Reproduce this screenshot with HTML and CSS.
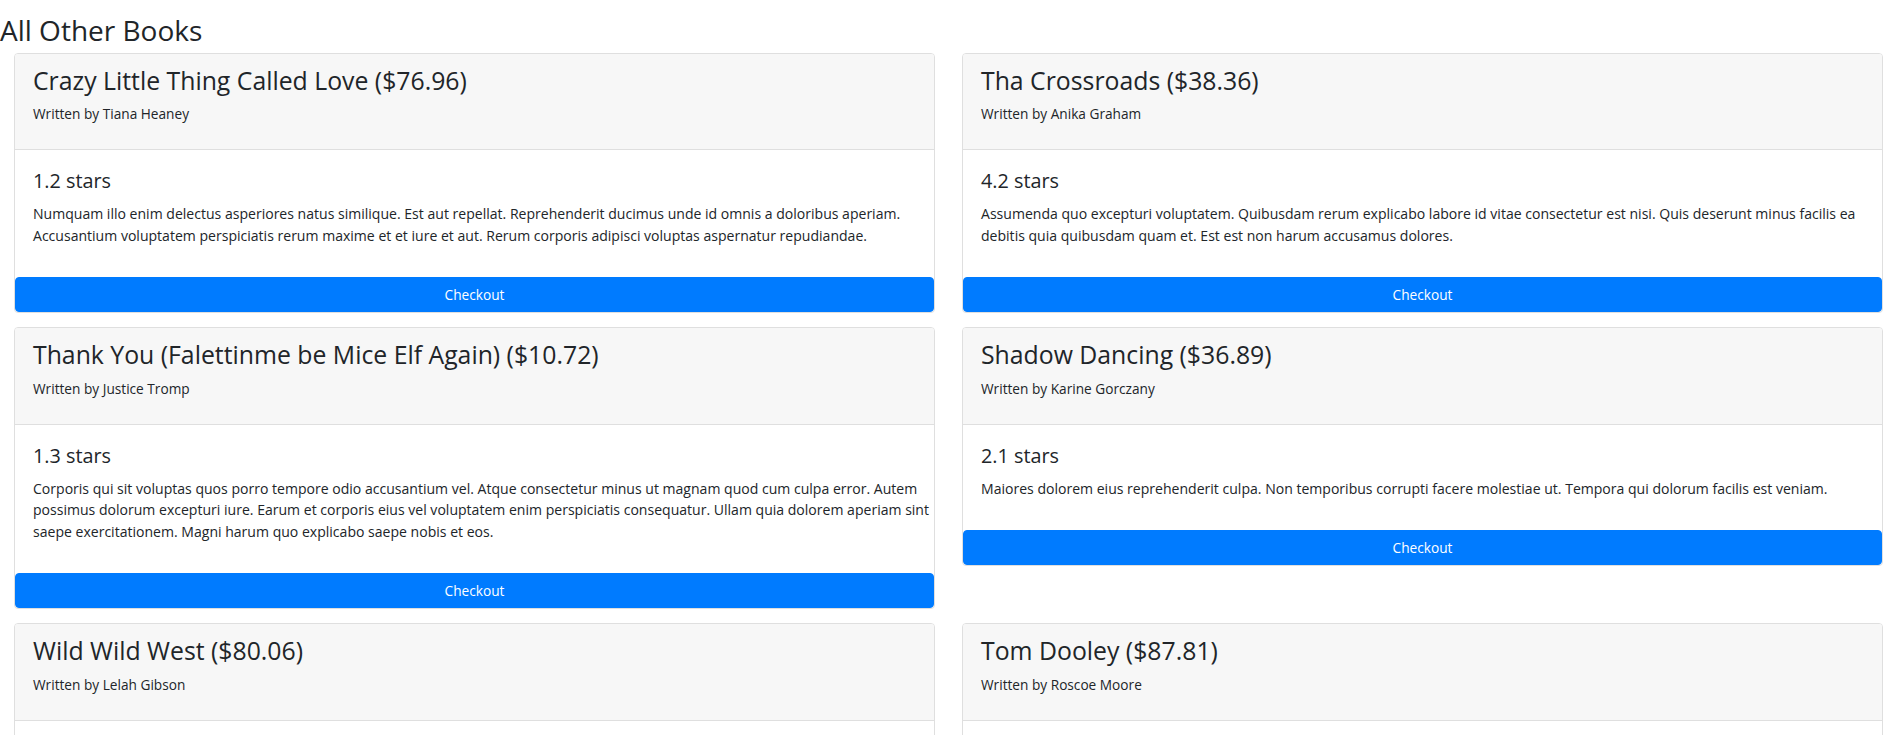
FILE: index.html
```html
<!DOCTYPE html>
<html lang="en">
<head>
<meta charset="utf-8">
<title>All Other Books</title>
<link rel="stylesheet" href="styles.css">
</head>
<body>
<h2 class="page-title">All Other Books</h2>
<div class="book-grid">
  <div class="book-card">
    <div class="book-header">
      <h4 class="book-title">Crazy Little Thing Called Love ($76.96)</h4>
      <p class="book-author">Written by Tiana Heaney</p>
    </div>
    <div class="book-body">
      <h5 class="book-rating">1.2 stars</h5>
      <p class="book-desc">Numquam illo enim delectus asperiores natus similique. Est aut repellat. Reprehenderit ducimus unde id omnis a doloribus aperiam. Accusantium voluptatem perspiciatis rerum maxime et et iure et aut. Rerum corporis adipisci voluptas aspernatur repudiandae.</p>
    </div>
    <button class="checkout-btn" type="button">Checkout</button>
  </div>
  <div class="book-card">
    <div class="book-header">
      <h4 class="book-title">Tha Crossroads ($38.36)</h4>
      <p class="book-author">Written by Anika Graham</p>
    </div>
    <div class="book-body">
      <h5 class="book-rating">4.2 stars</h5>
      <p class="book-desc">Assumenda quo excepturi voluptatem. Quibusdam rerum explicabo labore id vitae consectetur est nisi. Quis deserunt minus facilis ea debitis quia quibusdam quam et. Est est non harum accusamus dolores.</p>
    </div>
    <button class="checkout-btn" type="button">Checkout</button>
  </div>
  <div class="book-card">
    <div class="book-header">
      <h4 class="book-title">Thank You (Falettinme be Mice Elf Again) ($10.72)</h4>
      <p class="book-author">Written by Justice Tromp</p>
    </div>
    <div class="book-body">
      <h5 class="book-rating">1.3 stars</h5>
      <p class="book-desc">Corporis qui sit voluptas quos porro tempore odio accusantium vel. Atque consectetur minus ut magnam quod cum culpa error. Autem possimus dolorum excepturi iure. Earum et corporis eius vel voluptatem enim perspiciatis consequatur. Ullam quia dolorem aperiam sint saepe exercitationem. Magni harum quo explicabo saepe nobis et eos.</p>
    </div>
    <button class="checkout-btn" type="button">Checkout</button>
  </div>
  <div class="book-card">
    <div class="book-header">
      <h4 class="book-title">Shadow Dancing ($36.89)</h4>
      <p class="book-author">Written by Karine Gorczany</p>
    </div>
    <div class="book-body">
      <h5 class="book-rating">2.1 stars</h5>
      <p class="book-desc">Maiores dolorem eius reprehenderit culpa. Non temporibus corrupti facere molestiae ut. Tempora qui dolorum facilis est veniam.</p>
    </div>
    <button class="checkout-btn" type="button">Checkout</button>
  </div>
  <div class="book-card">
    <div class="book-header">
      <h4 class="book-title">Wild Wild West ($80.06)</h4>
      <p class="book-author">Written by Lelah Gibson</p>
    </div>
    <div class="book-body">
      <h5 class="book-rating">3.4 stars</h5>
      <p class="book-desc">Voluptas sed quia dolorem ut. Est consequatur eum aut nostrum.</p>
    </div>
    <button class="checkout-btn" type="button">Checkout</button>
  </div>
  <div class="book-card">
    <div class="book-header">
      <h4 class="book-title">Tom Dooley ($87.81)</h4>
      <p class="book-author">Written by Roscoe Moore</p>
    </div>
    <div class="book-body">
      <h5 class="book-rating">2.8 stars</h5>
      <p class="book-desc">Quia facilis nobis est. Aut sint rerum voluptatem aut.</p>
    </div>
    <button class="checkout-btn" type="button">Checkout</button>
  </div>
</div>
</body>
</html>
```
FILE: styles.css
```css
* { box-sizing: border-box; }

body {
  margin: 0;
  background: #ffffff;
  color: #212529;
  font-family: "Open Sans", "Noto Sans", sans-serif;
  font-size: 14px;
  line-height: 1.5;
}

.page-title {
  margin: 13px 0 6px 0;
  padding: 0;
  font-size: 28px;
  font-weight: 400;
  line-height: 34px;
  color: #212529;
}

.book-grid {
  display: grid;
  grid-template-columns: 921px 921px;
  column-gap: 27px;
  row-gap: 14px;
  align-items: start;
  padding-left: 14px;
}

.book-card {
  display: flex;
  flex-direction: column;
  background: #ffffff;
  border: 1px solid #dfdfdf;
  border-radius: 4px;
}

.book-header {
  background: #f7f7f7;
  border-bottom: 1px solid #dfdfdf;
  border-radius: 3px 3px 0 0;
  padding: 12px 18px 12px 18px;
}

.book-title {
  margin: 0 0 8px 0;
  font-size: 24.8px;
  font-weight: 400;
  line-height: 29.4px;
}

.book-author {
  margin: 0 0 13px 0;
  font-size: 13.66px;
  line-height: 21px;
}

.book-body {
  padding: 19px 2px 15px 18px;
}

.book-rating {
  margin: 0 0 10px 0;
  font-size: 19.8px;
  font-weight: 400;
  line-height: 24px;
}

.book-desc {
  margin: 0 0 16px 0;
  font-size: 14.05px;
  line-height: 21.5px;
}

.checkout-btn {
  display: block;
  width: 100%;
  height: 35px;
  margin: 0;
  padding: 6px 12px;
  border: 1px solid #007bff;
  border-radius: 4px;
  background: #007bff;
  color: #ffffff;
  font-family: "Open Sans", "Noto Sans", sans-serif;
  font-size: 13.7px;
  line-height: 21px;
  text-align: center;
  cursor: pointer;
}
```
